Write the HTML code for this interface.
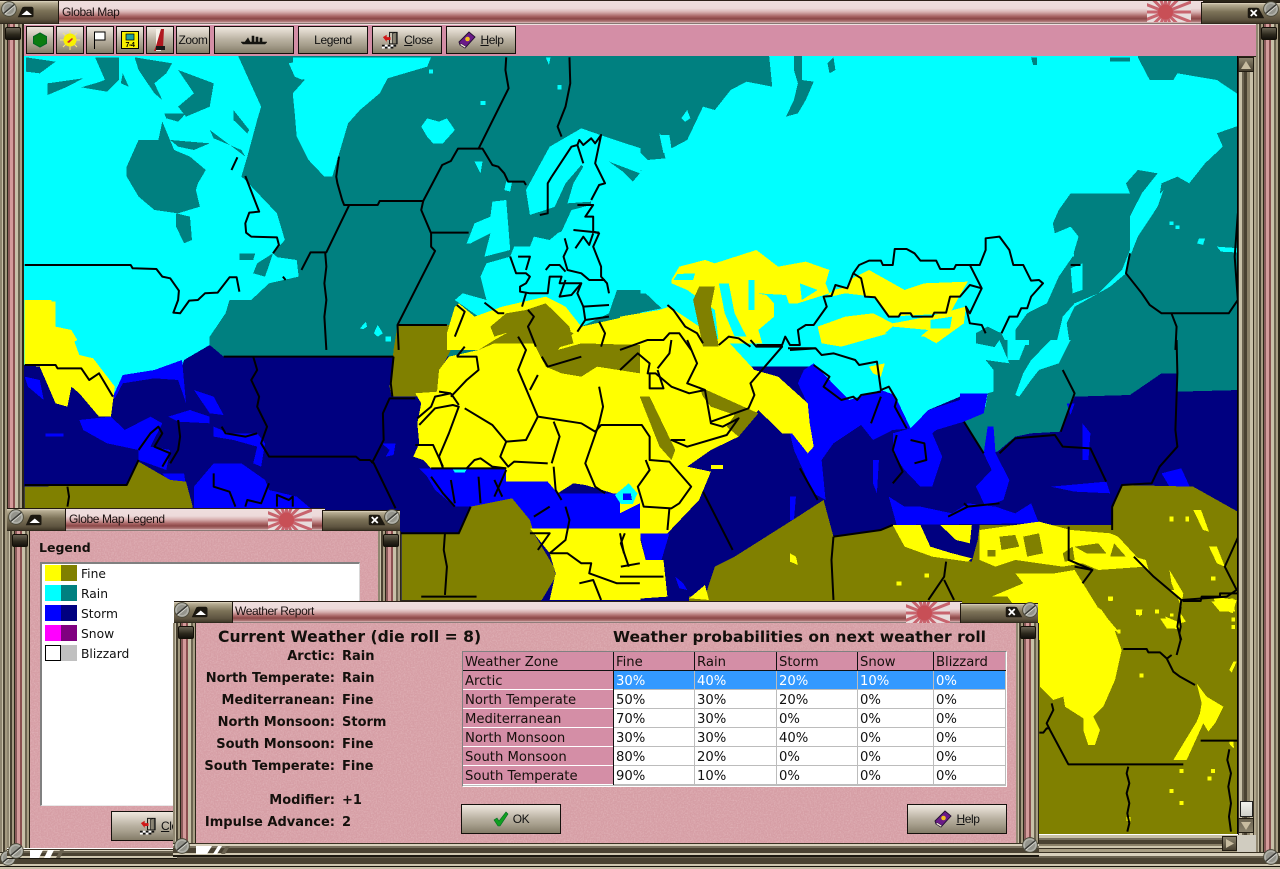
<!DOCTYPE html>
<html><head><meta charset="utf-8"><title>Global Map</title>
<style>
html,body{margin:0;padding:0;background:#2a2418}
body{position:relative;width:1280px;height:869px;overflow:hidden;font-family:"Liberation Sans",sans-serif;color:#000}
.a{position:absolute}
.title{position:absolute;background:linear-gradient(#2c2018 0 1px,#efdede 1px,#eddada 35%,#d8b0b0 50%,#a86464 68%,#8c4848 78%,#b07878 90%,#e4cccc 96%,#201810 100%)}
.cap{position:absolute;background:linear-gradient(#201810 0 1px,#e0d8c4 1px,#b8ae94 12%,#7c7258 45%,#5e5440 80%,#403828 96%,#1c1810 100%);border-right:1px solid #201810;border-left:1px solid #201810;box-sizing:border-box}
.tt{position:absolute;font-size:12px;letter-spacing:-.4px;line-height:13px;white-space:nowrap;color:#1a1010}
.vf{position:absolute;background:linear-gradient(to right,#8f8670 0 2px,#c8c0a8 2px 3px,#4a4232 3px 5px,#a49a80 5px 7px,#2c2618 7px 8px,#8a5a5a 8px 10px,#d49a9a 10px 13px,#8a5050 13px 15px,#c8c0a8 15px 18px,#6c6450 18px 20px,#a89e84 20px 22px,#2c2618 22px 23px)}
.hf{position:absolute;background:linear-gradient(#d8d0bc 0 2px,#3a3224 2px 3px,#c8c0a8 3px 5px,#8a8068 5px 8px,#5a5240 8px 11px,#cfc7b0 11px 13px,#403828 13px 14px)}
.knob{position:absolute;width:14px;height:11px;border-radius:2px;background:linear-gradient(#6a6454,#2c281c 60%,#14120c);border:1px solid #141008}
.body{position:absolute;background:#d69ea5}
.noise{position:absolute;left:0;top:0;width:100%;height:100%}
.btn{position:absolute;box-sizing:border-box;border:1px solid #15100c;background:linear-gradient(#eee7de,#d8d0c4 22%,#b8b0a0 50%,#a49c8a 72%,#847c68);font-size:12px;letter-spacing:-.4px;display:flex;align-items:center;justify-content:center;color:#111;white-space:nowrap}
.btn u{text-decoration:underline}
.b{font-family:"DejaVu Sans",sans-serif;font-weight:bold;position:absolute;white-space:nowrap;color:#14100c}
.lst{font-family:"DejaVu Sans",sans-serif;font-size:12.3px;position:absolute;left:81px;white-space:nowrap;color:#111}
.sw{position:absolute;width:16px;height:16px}
.grid{position:absolute;left:462px;top:651px;box-sizing:border-box;width:545px;height:136px;background:#bcbcbc;border:1px solid #fff;border-top-color:#808080;border-left-color:#808080;display:grid;grid-template-columns:150px 80px 81px 80px 75px 71px;grid-template-rows:18px repeat(6,18px);gap:1px;font-family:"DejaVu Sans",sans-serif;font-size:13.2px;line-height:21px}
.grid div{background:#fff;padding-left:2px;white-space:nowrap;overflow:hidden;color:#111}
.grid .h{background:#d48ea6;color:#15100c;box-shadow:0 1px 0 #fff}
.grid .s{background:#3399ff;color:#fff}
#map polygon,#map rect{shape-rendering:crispEdges}
#map polyline{fill:none;stroke:#000;stroke-width:2;vector-effect:non-scaling-stroke;stroke-linejoin:round}
.z7{transform:translate(20px,50px) scale(.3953,.3333)}
.z8{transform:translate(620px,50px) scale(.3953,.3333)}
.z9{transform:translate(20px,300px) scale(.3953,.3333)}
.z10{transform:translate(620px,340px) scale(.3953,.3333)}
.z11{transform:translate(1030px,590px) scale(.3333,.3333)}
</style></head><body>

<svg width="0" height="0" style="position:absolute"><defs>
<filter id="nz" x="0" y="0" width="100%" height="100%"><feTurbulence type="fractalNoise" baseFrequency=".7" numOctaves="2" seed="4"/><feColorMatrix values="0 0 0 0 1  0 0 0 0 .85  0 0 0 0 .85  1.1 0 0 0 -.42"/></filter>
<symbol id="sun" viewBox="0 0 44 21"><rect width="44" height="21" fill="#e8dcdc"/><g stroke="#c8646e" stroke-width="3"><path d="M-11.500 11L48.500 11M-9.500 0L46.500 22M-2.500 -10L39.500 32M7.500 -17L29.500 39M18.500 -19L18.500 41M29.500 -17L7.500 39M39.500 -10L-2.500 32M46.500 0L-9.500 22"/></g><circle cx="18.500" cy="11" r="7.500" fill="#c84f56"/></symbol>
<symbol id="screw" viewBox="0 0 18 18"><circle cx="9" cy="9" r="8.300" fill="#b0b0a8" stroke="#4a4838"/><circle cx="9" cy="9" r="5.800" fill="#94948c"/><path d="M3 14L15 4" stroke="#3c3c38" stroke-width="1.800"/><path d="M4 15L16 5" stroke="#dcdcd4" stroke-width="1"/></symbol>
<symbol id="tri" viewBox="0 0 24 16"><path d="M1 15L7 2Q8 1 10 1L19 1Q22 1 22 4L22 13Q22 15 20 15Z" fill="#1c1810"/><path d="M6 12L13 6L20 12Z" fill="#fff"/></symbol>
<symbol id="xb" viewBox="0 0 24 16"><path d="M1 3Q1 1 3 1L13 1Q15 1 16 2L23 15L3 15Q1 15 1 13Z" fill="#1c1810"/><path d="M5 4L13 12M13 4L5 12" stroke="#fff" stroke-width="2.400"/></symbol>
<symbol id="book" viewBox="0 0 18 18"><path d="M1 11L11 1L17 6L7 17L2 14Z" fill="#6a1a88" stroke="#221030" stroke-width=".9"/><path d="M2 14L7 17L8 15.500L3 12.500Z" fill="#f0e8d8" stroke="#221030" stroke-width=".5"/><circle cx="9.500" cy="8" r="2.300" fill="#f0c020"/></symbol>
<symbol id="door" viewBox="0 0 20 18"><path d="M9 1L17 1L17 13L9 13Z" fill="#c8c0b0" stroke="#111"/><path d="M12 2L16 1L16 13L12 13Z" fill="#8a8474" stroke="#111" stroke-width=".6"/><path d="M2 6L6 3.500L6 6L10 6L10 9L6 9L6 11Z" fill="#d01818"/><path d="M1 14h3v2h-3zM7 14h3v2h-3zM13 14h3v2h-3zM4 16h3v2h-3zM10 16h3v2h-3z" fill="#111"/><path d="M1 16h3v2h-3zM7 16h3v2h-3zM4 14h3v2h-3zM10 14h3v2h-3z" fill="#fff"/></symbol>
</defs></svg>

<!-- MAP -->
<svg id="map" class="a" style="left:24px;top:56px" width="1214" height="778" viewBox="24 56 1214 778">
<rect x="24" y="56" width="1214" height="420" fill="#00ffff"/>
<!-- teal -->
<g fill="#008080">
<g class="z7">
<polygon points="545,0 610,170 600,210 575,320 560,380 570,390 650,490 670,570 640,610 705,680 630,700 585,750 530,750 520,790 480,860 480,930 1570,930 1570,0"/>
<polygon points="270,350 300,270 350,270 360,215 390,300 430,320 470,360 450,400 445,420 455,470 400,490 340,480 300,440 270,380"/>
<polygon points="395,490 430,500 435,570 415,580 395,530"/>
<polygon points="15,22 90,35 50,70 15,65"/><polygon points="70,100 160,85 120,110 70,135"/>
<polygon points="190,22 250,22 250,90 220,125 155,112 190,100 215,90"/>
<polygon points="290,22 385,40 370,70 340,100 360,150 340,130 300,60"/>
<polygon points="400,60 490,100 480,170 420,200 400,170 440,130"/>
<polygon points="540,180 580,240 575,250 540,210"/><polygon points="260,70 275,110 255,100"/>
<polygon points="365,190 420,190 400,215 370,205"/><polygon points="480,240 570,320 560,300 490,265"/>
<polygon points="380,270 480,280 440,300 400,290"/>
<polygon points="555,610 595,610 590,630 555,630"/><polygon points="600,640 640,610 620,680 590,670"/>
</g>
<g class="z8">
<polygon points="-1,-10 375,-10 385,110 320,95 280,120 240,180 210,170 170,270 130,295 100,250 115,325 70,330 40,295 0,275"/>
<polygon points="440,0 460,0 460,90 490,95 470,150 450,190 420,200 440,150 450,100 440,60"/>
<polygon points="525,40 540,22 545,60 530,70"/><polygon points="1040,22 1055,22 1055,45 1045,45"/><polygon points="1240,22 1290,22 1290,35 1240,35"/>
<polygon points="1310,22 1340,90 1400,90 1410,70 1510,90 1560,130 1570,130 1570,0 1310,0"/>
<polygon points="1570,225 1510,250 1525,290 1480,340 1440,400 1410,380 1370,400 1360,470 1310,560 1290,620 1280,670 1240,710 1150,770 1130,820 1140,900 1570,900"/>
<polygon points="1140,430 1290,430 1280,400 1310,360 1360,370 1320,430 1290,500 1290,600 1270,660 1210,730 1150,760 1120,800 1100,900 1000,900 1000,840 1030,790 1080,760 1110,680 1145,620 1160,560 1140,530 1100,550 1095,520 1110,480"/>
<polygon points="900,850 930,830 965,850 985,900 900,880"/><polygon points="0,345 55,360 25,385 0,375"/>
<polygon points="0,730 65,730 105,775 0,800"/>
</g>
<g class="z10">
<polygon points="1570,0 1570,150 1410,155 1410,100 1370,100 1290,165 1150,170 1115,275 1040,280 1000,290 955,335 920,340 870,245 925,200 930,160 945,155 945,90 925,60 960,0"/>
</g>
</g>
<!-- cyan overlays -->
<g fill="#00ffff">
<g class="z7">
<polygon points="690,22 1040,22 1030,50 930,85 910,130 860,180 830,220 805,320 790,380 770,380 730,330 700,260 695,190 690,130 720,90 690,60"/>
<polygon points="1015,230 1030,205 1060,215 1080,205 1100,240 1070,280 1045,280 1030,260"/>
<polygon points="1130,580 1150,520 1190,500 1195,455 1230,450 1240,600 1175,620 1190,550 1140,580"/>
<polygon points="1100,750 1120,730 1180,750 1165,680 1180,640 1240,620 1250,590 1290,590 1300,560 1340,570 1370,540 1390,480 1380,460 1290,495 1280,420 1340,290 1420,235 1480,260 1570,295 1570,720 1510,720 1490,790 1420,830 1330,790 1220,790 1160,800"/>
<polygon points="1150,335 1170,335 1165,370"/><polygon points="860,835 875,815 878,830 868,838"/><polygon points="895,850 905,825 918,850 905,860"/><polygon points="925,860 938,860 938,875 925,875"/><polygon points="1330,22 1342,22 1338,45"/>
<polygon points="1165,153 1177,153 1177,165 1165,165"/><polygon points="1035,58 1045,58 1045,70 1035,70"/><polygon points="1360,105 1370,105 1370,118 1360,118"/>
<polygon points="1230,395 1245,395 1240,425 1225,420"/>
<polygon points="640,620 700,630 705,680 660,680"/><polygon points="680,40 720,30 715,90 695,80"/>
</g>
<g class="z7" fill="#008080">
<polygon points="1380,400 1420,345 1425,350 1400,400 1385,460 1445,455 1445,465 1395,480 1370,545 1325,560 1310,505 1300,520 1345,490"/>
<polygon points="1490,335 1568,370 1550,395 1525,365"/>
<polygon points="1570,720 1510,720 1490,790 1570,780"/>
</g>
<g class="z8">
<polygon points="100,255 125,255 130,295 110,310"/><polygon points="155,205 170,180 178,205 165,215"/>
<polygon points="1360,470 1375,420 1360,440"/>
<polygon points="1465,565 1480,565 1475,585 1460,580"/><polygon points="1510,590 1568,595 1568,608 1520,605"/>
<polygon points="1390,515 1400,515 1400,525 1390,525"/><polygon points="1405,527 1415,527 1415,537 1405,537"/>
<polygon points="1140,610 1148,610 1148,620 1140,620"/><polygon points="1140,655 1170,640 1170,720 1145,730"/><polygon points="1020,870 1035,870 1035,885 1020,885"/><polygon points="1350,335 1362,335 1362,345 1350,345"/>
</g>
<g class="z10">
<polygon points="1140,0 1110,70 1060,90 1040,120 1010,170 1000,165 1020,100 1040,60 1090,0"/>
<polygon points="980,0 1030,0 1010,60 980,60"/><polygon points="960,0 985,70 925,60"/>
</g>
</g>
<!-- navy -->
<g fill="#000080">
<polygon class="z9" points="0,195 150,200 235,290 260,225 410,200 415,180 480,135 515,170 1570,170 1570,900 0,900"/>
<polygon class="z10" points="-200,80 480,80 530,120 580,180 660,150 695,165 735,265 780,210 860,170 930,160 870,245 920,340 955,335 1000,290 1040,280 1115,275 1150,170 1290,165 1370,100 1410,100 1410,155 1570,150 1570,900 -200,900"/>
</g>
<!-- blue -->
<g fill="#0000ff">
<g class="z9">
<polygon points="235,290 260,225 340,210 410,180 420,310 400,240 340,235 260,250 240,295"/>
<polygon points="150,360 230,350 265,390 330,350 360,370 330,440 380,450 370,510 300,480 300,450 220,430 160,390"/>
<polygon points="375,350 430,330 480,350 480,370 400,365"/>
<polygon points="440,625 440,560 490,490 560,490 620,540 630,570 700,590 735,625"/>
<polygon points="360,520 415,520 420,560 390,570"/>
<polygon points="490,380 530,400 600,400 620,430 610,500 590,490 600,440 540,420 490,410"/>
<polygon points="440,270 490,290 515,345 480,340"/>
<polygon points="915,430 950,430 945,465 925,470 935,450"/>
<polygon points="65,400 110,400 110,410 65,410"/>
<polygon points="1010,505 1230,505 1230,545 1335,545 1360,580 1570,580 1570,685 1290,685 1290,660 1245,595 1140,620 1100,620 1050,570 1030,530"/>
<polygon points="12,230 50,240 60,300 20,260"/>
</g>
<g class="z10">
<polygon points="490,70 530,120 580,180 660,150 695,165 735,265 690,270 640,300 610,255 540,310 510,360 520,480 490,460 440,330 430,280 480,240 470,180 450,130 465,90"/>
<polygon points="735,265 780,210 860,180 860,160 930,160 920,220 870,245 800,270 790,280 815,350 790,440 760,440 720,390 690,340 690,280"/>
<polygon points="930,260 945,260 950,340 985,420 970,480 925,500 900,440 940,390 920,340"/>
<polygon points="680,470 720,500 760,500 840,520 880,490 950,500 1000,520 1040,490 1060,550 700,555"/>
<polygon points="640,360 655,360 650,460 640,430"/>
<polygon points="1090,440 1230,425 1240,460 1150,455"/><polygon points="1370,400 1420,385 1445,450 1390,440"/>
<polygon points="1170,250 1190,280 1185,360 1170,360"/>
<polygon points="430,470 445,470 440,540 430,540"/>
<polygon points="50,580 125,580 105,660 65,660"/>
<polygon points="140,710 160,730 170,750 150,745"/>
<polygon points="1130,190 1150,190 1140,225"/>
<polygon points="1270,460 1360,475 1350,485 1310,485 1270,500"/>
</g>
</g>
<!-- olive -->
<g fill="#808000">
<g class="z9">
<polygon points="12,560 270,555 300,485 380,540 420,545 437,620 437,900 12,900"/>
<polygon points="955,75 1090,75 1090,150 1060,220 1055,275 1020,290 1000,290 940,290 935,260 945,150"/>
<polygon points="965,700 1110,700 1140,620 1245,595 1290,660 1300,700 1350,800 1355,830 1320,900 965,900"/>
</g>
<polygon class="z10" points="120,1600 175,770 215,770 240,680 290,650 450,530 515,480 540,590 660,570 700,555 720,620 890,665 905,600 910,555 1245,555 1245,510 1270,435 1450,440 1570,520 1570,1600"/>
</g>
<!-- yellow -->
<g fill="#ffff00">
<g class="z7">
<polygon points="22,755 90,755 90,830 130,840 145,870 100,900 20,900 12,830"/>
<polygon points="1080,850 1100,770 1110,760 1150,800 1220,770 1330,740 1380,770 1420,830 1570,790 1570,900 1080,900"/>
</g>
<g class="z8">
<polygon points="130,690 150,650 215,630 240,640 345,600 400,650 470,635 530,660 520,700 530,730 450,760 390,760 390,800 350,840 360,880 250,880 240,780 170,720 130,700"/>
<polygon points="580,690 630,660 720,720 770,700 880,695 860,735 835,790 680,800 640,740 570,730 515,745 540,720 580,710"/>
<polygon points="500,830 570,800 640,790 690,820 780,800 875,770 870,820 800,880 770,860 680,850 560,890 510,880"/>
<polygon points="0,800 100,780 125,770 290,900 0,900"/>
</g>
<g class="z8" fill="#00ffff">
<polygon points="250,700 275,700 290,790 320,860 290,860 265,790"/>
<polygon points="325,690 340,690 340,780 325,780"/>
<polygon points="345,730 420,735 430,770 390,760 370,735"/>
<polygon points="455,700 500,720 460,750"/>
<polygon points="135,690 185,690 190,670 145,672"/>
<polygon points="690,830 780,840 760,860 670,850"/>
<polygon points="785,810 840,800 835,835 785,835"/>
</g>
<g class="z9">
<polygon points="12,0 80,0 85,110 130,100 150,165 185,175 240,260 230,350 200,350 150,280 130,260 120,320 90,310 50,200 12,195"/>
<polygon points="995,470 1010,430 1005,370 1015,310 1000,280 1055,275 1060,210 1085,170 1160,150 1280,130 1570,100 1570,580 1500,580 1430,555 1400,550 1360,580 1335,545 1230,545 1230,505 1090,505 1040,505 1020,480"/>
<polygon points="1290,685 1570,685 1570,900 1340,900 1355,820 1340,760"/>
</g>
<g class="z10">
<polygon points="0,0 270,0 340,90 400,110 475,190 480,250 490,320 475,340 435,280 410,280 350,210 300,290 230,330 170,380 230,395 200,480 120,580 50,580 50,490 0,520"/>
<polygon points="0,570 45,570 65,660 110,660 120,770 0,780"/>
<polygon points="175,775 215,735 225,780"/>
<polygon points="690,555 760,555 785,620 840,640 890,655 880,665 790,650 720,620"/>
<polygon points="810,555 890,555 885,610 850,600"/>
<polygon points="910,570 1060,545 1140,570 1240,580 1260,590 1330,680 1210,690 1170,670 1120,680 1000,660 950,680 910,660"/>
<polygon points="1000,700 1100,700 1150,690 1260,900 1060,900 980,770 940,770 1020,730"/>
<polygon points="630,80 670,70 660,110 640,100"/>
<polygon points="230,375 260,375 260,387 230,387"/><polygon points="430,640 445,650 450,675 430,665"/>
<polygon points="1450,510 1470,510 1490,575 1475,570"/><polygon points="1490,620 1510,620 1530,680 1510,670"/>
<polygon points="1390,690 1425,760 1420,800 1395,730"/><polygon points="1380,830 1420,850 1415,870 1385,860"/>
<polygon points="1500,770 1560,780 1550,820 1510,800"/>
<polygon points="1300,650 1340,700 1330,660"/><polygon points="1215,810 1265,880 1230,860"/>
<polygon points="1390,530 1400,530 1400,545 1390,545"/><polygon points="1430,530 1440,530 1440,545 1430,545"/><polygon points="770,700 782,700 782,712 770,712"/><polygon points="700,725 712,725 712,737 700,737"/><polygon points="1235,770 1247,770 1247,782 1235,782"/><polygon points="1305,810 1320,810 1320,825 1305,825"/><polygon points="1495,710 1507,710 1507,722 1495,722"/>
</g>
<g class="z10" fill="#808000">
<polygon points="960,590 1000,585 1010,620 965,630"/><polygon points="1020,590 1060,580 1070,640 1030,650"/><polygon points="1150,620 1210,610 1230,640 1180,640"/><polygon points="930,630 950,630 950,650 930,650"/><polygon points="1250,610 1280,650 1240,650"/><polygon points="1120,640 1145,620 1150,660 1125,665"/>
</g>
<g class="z11">
<polygon points="30,0 160,0 185,40 215,60 250,110 275,180 255,270 220,350 190,380 210,420 195,465 175,465 160,420 160,385 105,350 100,320 70,330 30,290"/>
<polygon points="500,280 530,320 580,350 555,400 535,425 520,400 470,510 430,510 500,395 510,370 515,340"/>
<polygon points="545,35 610,25 615,65 570,65"/><polygon points="390,85 415,85 435,115 410,115"/><polygon points="420,0 450,0 450,30"/><polygon points="315,58 338,58 330,80"/>
<polygon points="235,20 248,20 248,33 235,33"/><polygon points="375,58 387,58 387,70 375,70"/><polygon points="420,70 430,70 430,80 420,80"/><polygon points="605,82 615,82 615,94 605,94"/><polygon points="605,105 615,105 615,117 605,117"/><polygon points="610,215 620,215 605,248 598,240"/><polygon points="328,250 340,250 340,262 328,262"/><polygon points="448,537 460,537 460,549 448,549"/><polygon points="543,537 555,537 555,549 543,549"/><polygon points="532,560 544,560 544,572 532,572"/><polygon points="418,597 430,597 430,609 418,609"/><polygon points="448,633 460,633 460,645 448,645"/><polygon points="290,681 302,681 302,693 290,693"/><polygon points="598,455 610,455 612,475 600,465"/><polygon points="262,118 272,118 272,130 262,130"/><polygon points="445,60 468,95 450,100"/>
</g>
</g>
<!-- olive over -->
<g fill="#808000">
<g class="z7"><polygon points="1190,830 1230,790 1280,780 1330,760 1390,830 1400,880 1340,900 1280,830 1200,860"/></g>
<g class="z8"><polygon points="200,710 240,710 230,770 250,890 210,890 185,750"/></g>
<g class="z9"><polygon points="1160,150 1200,120 1230,100 1250,50 1300,30 1340,60 1400,100 1360,150 1420,130 1568,135 1568,220 1460,200 1420,230 1370,220 1330,200 1300,130 1200,130"/></g>
<g class="z10"><polygon points="50,170 75,170 140,330 130,360 100,320"/><polygon points="200,140 350,220 300,290 270,260 290,225 230,200 210,170"/></g>
</g>
<!-- small cyan ring -->
<g class="z9"><polygon points="1505,585 1540,550 1562,580 1550,612 1520,612" fill="#00ffff"/><polygon points="1525,580 1545,580 1548,600 1525,600" fill="#0000ff"/><polygon points="1095,508 1130,508 1125,518 1100,518" fill="#00ffff"/></g>
<!-- borders -->
<g class="z7">
<polyline points="12,645 280,645 285,655 345,657 360,680 380,685 402,722 400,750 388,788 405,790 428,752 450,750 468,730 500,728 530,682 548,682 555,725"/>
<polyline points="550,322 535,360"/>
<polyline points="570,378 605,485 580,488 570,520 572,548 585,560 650,562 655,585 640,610"/>
<polyline points="665,680 672,690"/>
<polyline points="807,320 800,380 803,400 815,450 820,465 905,465 910,453 1020,453 1068,345 1090,333 1108,296 1170,296 1195,345 1210,350 1225,370 1235,395 1275,395 1280,405"/>
<polyline points="1230,22 1228,60 1236,115 1160,296"/>
<polyline points="1390,22 1392,100 1380,170 1360,230 1370,260"/>
<polyline points="833,465 775,607 735,607 712,660"/>
<polyline points="772,607 775,650 770,700 775,750 770,800 775,900"/>
<polyline points="1020,453 1015,480 1040,550 1040,590 1050,603 955,825 958,900"/>
<polyline points="1040,548 1135,548"/><polyline points="955,825 1080,825"/>
<polyline points="1345,380 1395,290 1410,285 1415,270 1425,285 1445,265 1455,280 1470,255 1455,340 1480,400 1465,405 1445,450"/>
<polyline points="1345,380 1335,400 1335,460 1335,490 1315,495"/>
<polyline points="1410,285 1425,340"/>
<polyline points="1410,465 1450,465 1430,500 1450,500 1450,545 1465,550 1450,590 1470,650 1470,680 1485,700 1490,730"/>
<polyline points="1400,540 1465,548"/><polyline points="1378,565 1385,595 1375,620 1385,660 1420,670 1440,690 1480,690"/>
<polyline points="1405,595 1425,560 1440,585 1450,550"/>
<polyline points="1240,620 1255,670 1280,670 1290,680 1280,700 1265,710 1265,725 1290,730 1335,730 1340,680 1370,680 1365,700 1420,700 1410,730 1425,770 1490,765"/>
<polyline points="1260,620 1290,620 1280,660"/>
<polyline points="1330,660 1340,645 1365,645 1380,665"/>
<polyline points="1425,770 1430,810 1410,845"/><polyline points="1430,810 1490,800"/>
<polyline points="1105,765 1125,785 1100,860"/><polyline points="1175,758 1210,790 1225,790"/>
<polyline points="1270,770 1280,730"/><polyline points="1285,780 1300,800 1285,830 1305,890"/>
<polyline points="1380,690 1365,740 1395,735 1420,700"/>
<polyline points="1465,815 1480,850 1470,890"/>
</g>
<g class="z8">
<polyline points="120,765 135,780 165,830 195,850 210,880"/>
<polyline points="425,895 495,895"/>
<polyline points="345,885 410,885 418,860 430,885 455,885 450,840 470,825 490,825 523,770 515,740 535,738 545,705 575,715 590,670 605,645 630,632 660,632 665,645 690,645 695,597 725,597 745,610 760,632 800,632 810,657 845,657 850,645 910,645 925,600 925,565 960,560 985,600 995,645 1020,645 1040,692 1060,690 1070,700 1040,740 1030,775 1015,775 1005,800 985,800 965,850"/>
<polyline points="590,670 610,685 620,740 645,742 680,800 705,800 710,790 735,790 740,800 790,800 795,788 825,788 835,740 860,740 885,705 915,715 885,645"/>
<polyline points="915,715 885,790 875,770 885,820 915,825 925,850"/>
<polyline points="1140,645 1165,645"/>
<polyline points="1290,610 1285,640 1280,670 1320,730 1340,765 1370,790 1540,790 1563,750 1555,620 1563,490"/>
<polyline points="1395,790 1408,830 1405,900"/>
<polyline points="0,900 70,870 110,870 125,850 150,850 180,900"/>
<polyline points="250,885 275,860 300,865 330,890"/>
</g>
<g class="z9">
<polyline points="12,195 90,195 95,205 155,205 175,240 200,220 235,290"/>
<polyline points="590,170 600,210 585,240 605,290 600,320 625,380 610,430 630,470 850,470 860,480 885,480 895,490 950,625"/>
<polyline points="890,490 920,420 918,340 935,295 1000,295"/>
<polyline points="300,480 270,555 12,555"/><polyline points="120,560 124,590 120,620"/>
<polyline points="515,170 945,170"/><polyline points="945,170 938,250 942,290"/>
<polyline points="300,450 330,400 350,380 360,400 340,440 380,460 360,500"/>
<polyline points="400,360 405,410 400,450 380,490"/>
<polyline points="510,380 520,400 570,410 600,400"/>
<polyline points="490,520 490,560 530,575 545,620"/><polyline points="570,620 575,600 610,610 630,550"/><polyline points="650,620 650,585 680,600 690,590 690,620"/>
<polyline points="960,700 1110,700 1140,620"/><polyline points="1075,700 1072,750 1080,800 1075,885"/><polyline points="1015,890 1155,890"/>
<polyline points="1010,375 1050,325 1095,315 1110,320 1085,400 1060,470 1070,505"/>
<polyline points="1125,325 1195,375 1230,425 1280,420 1310,350 1420,370 1455,395 1470,375 1568,375"/>
<polyline points="1005,355 1040,320 1050,290 1090,280"/><polyline points="1090,280 1110,315"/><polyline points="1090,290 1130,240 1160,210 1155,170 1105,170"/><polyline points="1060,275 1090,280"/>
<polyline points="1310,350 1260,210 1280,150 1260,110"/><polyline points="1290,270 1310,225"/>
<polyline points="1350,365 1365,410 1345,490"/><polyline points="1350,500 1355,570 1370,600"/>
<polyline points="1230,425 1215,470 1235,500 1250,485 1335,490"/>
<polyline points="1465,370 1430,490 1455,560 1480,580"/><polyline points="1465,370 1475,320 1465,260"/>
<polyline points="1000,435 1045,435 1070,500"/><polyline points="1130,505 1150,480 1165,475 1195,500 1230,505"/>
<polyline points="1040,505 1230,505"/><polyline points="1040,530 1070,580 1100,620"/><polyline points="1090,540 1100,610"/><polyline points="1160,530 1165,610"/><polyline points="1200,540 1220,590"/><polyline points="1230,510 1200,590"/>
<polyline points="1320,170 1335,200 1420,170"/><polyline points="1105,170 1125,140"/>
<polyline points="1290,700 1340,700 1310,750"/><polyline points="1340,760 1385,760 1420,790 1445,790 1440,820 1510,850 1568,850"/>
<polyline points="1300,650 1340,620"/><polyline points="1380,620 1390,660 1380,720 1340,760"/><polyline points="1520,800 1568,790"/><polyline points="1530,700 1520,730 1540,800"/>
<polyline points="1415,850 1450,840 1470,900"/>
</g>
<g class="z10">
<polyline points="0,255 55,255 75,290 75,360 125,365 180,440 150,490 130,505 60,500 45,440 75,390 65,360"/>
<polyline points="0,90 45,40 75,70 70,100 90,100 130,140 175,160 215,150 230,250 260,260 300,235 270,285 170,320 130,300 165,300"/>
<polyline points="170,0 195,70 170,130 215,150"/>
<polyline points="330,0 345,20 410,20 330,130 340,165 325,205 230,245"/>
<polyline points="130,0 125,40 95,85"/><polyline points="75,100 75,145 110,145 95,90"/>
<polyline points="430,30 495,25 510,45 540,40 595,60 605,75 650,65 660,150 680,140 700,180 695,200 725,265"/>
<polyline points="490,75 530,110 515,140 560,180 590,170 600,180 610,165 660,155"/>
<polyline points="660,170 635,250"/>
<polyline points="700,285 690,330 715,395 690,430"/><polyline points="735,300 770,310 775,360 745,370"/>
<polyline points="210,455 285,630"/><polyline points="455,385 500,480"/>
<polyline points="870,245 920,340"/><polyline points="960,340 1000,295 1100,285 1120,320 1190,325 1230,425"/>
<polyline points="1120,90 1150,160 1115,275"/>
<polyline points="1408,0 1410,100 1405,270 1410,320 1365,380 1345,430 1270,435 1245,500 1245,570"/>
<polyline points="540,590 535,660 540,780"/><polyline points="540,590 660,570 690,555"/>
<polyline points="825,665 820,710 780,780"/><polyline points="820,720 845,780"/>
<polyline points="870,490 880,500 960,490"/><polyline points="830,530 880,500"/>
<polyline points="1135,560 1135,660 1195,690 1170,730"/><polyline points="1195,690 1150,680"/>
<polyline points="1300,650 1350,710 1420,780 1535,770 1560,750 1530,680 1568,580"/>
<polyline points="1420,780 1410,860 1420,900"/>
<polyline points="125,505 120,570"/><polyline points="0,580 10,640"/><polyline points="0,710 110,710"/>
</g>
<g class="z11">
<polyline points="280,177 350,177 355,187 390,187 410,205 430,245 450,260 495,285"/>
<polyline points="412,205 425,195"/><polyline points="458,33 512,33 515,20 570,20 570,10 625,10"/>
<polyline points="452,50 448,80 452,110 448,130 452,150 440,195"/>
<polyline points="65,340 70,360 50,400 60,420 115,523 460,523"/><polyline points="28,428 40,428 50,415 60,415"/>
<polyline points="295,530 290,550 298,580 290,610 298,640 292,670 298,700 292,725"/>
<polyline points="512,452 625,452"/><polyline points="598,478 592,510 603,550 595,590 603,640 597,680 603,725"/>
</g>
<rect x="1237" y="56" width="1" height="778" fill="#000"/>
</svg>

<!-- MAIN WINDOW FRAME -->
<div class="title" style="left:58px;top:0;width:1145px;height:24px"></div>
<div class="tt" style="left:62px;top:6px">Global Map</div>
<svg class="a" style="left:1147px;top:1px" width="44" height="21"><use href="#sun"/></svg>
<div class="cap" style="left:0;top:0;width:59px;height:24px;border-left:0"></div>
<svg class="a" style="left:17px;top:6px" width="18" height="12"><use href="#tri"/></svg>
<svg class="a" style="left:1px;top:1px" width="16" height="16"><use href="#screw"/></svg>
<div class="cap" style="left:1201px;top:2px;width:79px;height:22px;border-right:0"></div>
<svg class="a" style="left:1247px;top:7px" width="18" height="12"><use href="#xb"/></svg>
<svg class="a" style="left:1263px;top:1px" width="16" height="16"><use href="#screw"/></svg>

<div class="vf" style="left:0;top:24px;width:24px;height:830px"></div>
<div class="knob" style="left:5px;top:27px"></div>
<div class="vf" style="left:1256px;top:24px;width:24px;height:830px"></div>
<div class="knob" style="left:1261px;top:27px"></div>

<div class="a" style="left:24px;top:24px;width:1232px;height:32px;background:#d48ea6;border-top:1px solid #efe0e0;box-sizing:border-box"></div>
<!-- toolbar -->
<div class="btn" style="left:26px;top:26px;width:28px;height:28px"><svg width="18" height="18" viewBox="0 0 18 18"><path d="M9 2L15.500 5.500L15.500 12.500L9 16L2.500 12.500L2.500 5.500Z" fill="#0c7c10" stroke="#062"/></svg></div>
<div class="btn" style="left:56px;top:26px;width:28px;height:28px"><svg width="22" height="22" viewBox="0 0 22 22"><g stroke="#f4e87a" stroke-width="1"><path d="M11 1V21M1 11H21M4 4L18 18M18 4L4 18"/></g><circle cx="11" cy="11" r="6.500" fill="#f8f000"/><path d="M8 13L13 9L14 10L10 14Z" fill="#d02030"/></svg></div>
<div class="btn" style="left:86px;top:26px;width:28px;height:28px"><svg width="16" height="20" viewBox="0 0 16 20"><path d="M2.500 19V2H13V10H3" fill="#fff" stroke="#000"/></svg></div>
<div class="btn" style="left:116px;top:26px;width:28px;height:28px"><svg width="20" height="20" viewBox="0 0 20 20"><rect x="1.500" y="1.500" width="17" height="17" fill="#f8f000" stroke="#000"/><rect x="6" y="4" width="8" height="6" fill="#20a0a0" stroke="#000" stroke-width=".7"/><text x="10" y="17" font-size="7" font-weight="bold" text-anchor="middle" font-family="Liberation Sans">7-4</text></svg></div>
<div class="btn" style="left:146px;top:26px;width:28px;height:28px"><svg width="18" height="24" viewBox="0 0 18 24"><rect x="5" y="1" width="5" height="22" fill="#f4f0e8"/><path d="M10 1L13 1L12 20L5 21L5 23L3 23L5 18Z" fill="#b01820"/><rect x="5" y="18" width="9" height="4" fill="#1a1a1a"/></svg></div>
<div class="btn" style="left:176px;top:26px;width:34px;height:28px">Zoom</div>
<div class="btn" style="left:214px;top:26px;width:80px;height:28px"><svg width="26" height="10" viewBox="0 0 26 10"><path d="M0 7H26L24 9H2ZM4 7L7 3L9 7M11 7V1H13V7M15 7V2H17V7M19 7V3H21V7" fill="#151510" stroke="#151510" stroke-width=".6"/></svg></div>
<div class="btn" style="left:298px;top:26px;width:70px;height:28px">Legend</div>
<div class="btn" style="left:372px;top:26px;width:70px;height:28px"><svg width="19" height="18" style="margin-right:4px"><use href="#door"/></svg><span><u>C</u>lose</span></div>
<div class="btn" style="left:446px;top:26px;width:70px;height:28px"><svg width="18" height="18" style="margin-right:4px"><use href="#book"/></svg><span><u>H</u>elp</span></div>

<!-- scrollbars -->
<div class="a" style="left:1238px;top:57px;width:18px;height:778px;background:linear-gradient(to right,#3a3224 0 1px,#c8c0a8 1px 4px,#6a6250 4px 6px,#4a4232 6px 9px,#8a8068 9px 12px,#c8c0a8 12px 15px,#3a3224 15px 16px,#b0a68c 16px 18px)"></div>
<div class="a" style="left:1238px;top:57px;width:16px;height:15px;background:linear-gradient(#8a826c,#4a4232);border:1px solid #221c12;box-sizing:border-box"><svg width="14" height="13" style="display:block"><path d="M7 3L12 11H2Z" fill="#c8bca0"/></svg></div>
<div class="a" style="left:1240px;top:801px;width:13px;height:16px;background:linear-gradient(#f2f2ee,#cfcfc8);border:1px solid #222;box-sizing:border-box"></div>
<div class="a" style="left:1238px;top:818px;width:16px;height:15px;background:linear-gradient(#6a6250,#8a826c);border:1px solid #221c12;box-sizing:border-box"><svg width="14" height="13" style="display:block"><path d="M7 11L12 3H2Z" fill="#c8bca0"/></svg></div>
<div class="hf" style="left:1024px;top:834px;width:214px;height:18px;background:linear-gradient(#fff 0 1px,#c8c0a8 1px 4px,#7a7260 4px 6px,#4a4232 6px 10px,#8a8068 10px 12px,#d0c8b0 12px 14px,#3a3224 14px 15px,#a89e84 15px 18px)"></div>
<div class="a" style="left:1222px;top:836px;width:15px;height:15px;background:linear-gradient(#8a826c,#4a4232);border:1px solid #221c12;box-sizing:border-box"><svg width="13" height="13" style="display:block"><path d="M3 2L11 6.500L3 11Z" fill="#c8bca0"/></svg></div>
<div class="a" style="left:1237px;top:835px;width:19px;height:17px;background:#d0ccc0"></div>
<div class="hf" style="left:0;top:852px;width:1280px;height:17px;background:linear-gradient(#3a3224 0 1px,#d8d0bc 1px 4px,#6a6250 4px 6px,#4a4232 6px 12px,#cfc7b0 12px 14px,#1a160e 14px 15px,#c8c0a8 15px 17px)"></div>
<svg class="a" style="left:1263px;top:849px" width="16" height="16"><use href="#screw"/></svg>
<svg class="a" style="left:0;top:850px" width="16" height="16"><use href="#screw"/></svg>

<!-- LEGEND WINDOW -->
<div class="title" style="left:65px;top:508px;width:260px;height:23px"></div>
<div class="tt" style="left:69px;top:513px">Globe Map Legend</div>
<svg class="a" style="left:268px;top:509px" width="44" height="21"><use href="#sun"/></svg>
<div class="cap" style="left:7px;top:508px;width:59px;height:23px;border-left:0"></div>
<svg class="a" style="left:25px;top:514px" width="18" height="12"><use href="#tri"/></svg>
<svg class="a" style="left:8px;top:509px" width="16" height="16"><use href="#screw"/></svg>
<div class="cap" style="left:322px;top:510px;width:78px;height:21px;border-right:0"></div>
<svg class="a" style="left:368px;top:514px" width="18" height="12"><use href="#xb"/></svg>
<svg class="a" style="left:384px;top:509px" width="16" height="16"><use href="#screw"/></svg>
<div class="vf" style="left:7px;top:531px;width:23px;height:320px"></div>
<div class="knob" style="left:12px;top:534px"></div>
<div class="vf" style="left:378px;top:531px;width:23px;height:100px"></div>
<div class="knob" style="left:383px;top:534px"></div>
<div class="body" style="left:30px;top:531px;width:348px;height:318px;overflow:hidden"><svg class="noise"><rect width="100%" height="100%" filter="url(#nz)" opacity=".45"/></svg></div>
<div class="hf" style="left:7px;top:848px;width:170px;height:11px;background:linear-gradient(#fff 0 1px,#3a3224 1px 2px,#d8d0bc 2px 3px,#6a6250 3px 5px,#4a4232 5px 8px,#cfc7b0 8px 10px,#1a160e 10px 11px)"></div>
<svg class="a" style="left:30px;top:850px" width="50" height="8"><path d="M0 0H13L9 8H0ZM18 0H24L20 8H14Z" fill="#fff"/><path d="M30 0H34L30 8H26Z" fill="#6a6250"/></svg>
<svg class="a" style="left:8px;top:843px" width="16" height="16"><use href="#screw"/></svg>
<div class="b" style="left:39px;top:540px;font-size:12.500px;line-height:15px">Legend</div>
<div class="a" style="left:40px;top:562px;width:320px;height:244px;box-sizing:border-box;background:#fff;border:1px solid #fff;border-top:2px solid #808080;border-left:2px solid #808080;border-right-color:#d8d8d8;border-bottom-color:#e8e8e8"></div>
<div class="sw" style="left:45px;top:565px;background:#ffff00"></div><div class="sw" style="left:61px;top:565px;background:#808000"></div><div class="lst" style="top:567px">Fine</div>
<div class="sw" style="left:45px;top:585px;background:#00ffff"></div><div class="sw" style="left:61px;top:585px;background:#008080"></div><div class="lst" style="top:587px">Rain</div>
<div class="sw" style="left:45px;top:605px;background:#0000ff"></div><div class="sw" style="left:61px;top:605px;background:#000080"></div><div class="lst" style="top:607px">Storm</div>
<div class="sw" style="left:45px;top:625px;background:#ff00ff"></div><div class="sw" style="left:61px;top:625px;background:#800080"></div><div class="lst" style="top:627px">Snow</div>
<div class="sw" style="left:45px;top:645px;background:#fff;border:1px solid #000;box-sizing:border-box"></div><div class="sw" style="left:61px;top:645px;background:#c0c0c0"></div><div class="lst" style="top:647px">Blizzard</div>
<div class="btn" style="left:111px;top:811px;width:100px;height:30px;justify-content:flex-start;padding-left:27px"><svg width="19" height="18" style="margin-right:3px"><use href="#door"/></svg><span><u>C</u>lose</span></div>

<!-- WEATHER WINDOW -->
<div class="title" style="left:232px;top:601px;width:730px;height:22px"></div>
<div class="tt" style="left:235px;top:605px">Weather Report</div>
<svg class="a" style="left:906px;top:602px" width="44" height="21"><use href="#sun"/></svg>
<div class="cap" style="left:174px;top:601px;width:59px;height:22px;border-left:0"></div>
<svg class="a" style="left:191px;top:606px" width="18" height="12"><use href="#tri"/></svg>
<svg class="a" style="left:174px;top:602px" width="16" height="16"><use href="#screw"/></svg>
<div class="cap" style="left:960px;top:603px;width:78px;height:20px;border-right:0"></div>
<svg class="a" style="left:1005px;top:606px" width="18" height="12"><use href="#xb"/></svg>
<svg class="a" style="left:1022px;top:602px" width="16" height="16"><use href="#screw"/></svg>
<div class="vf" style="left:173px;top:623px;width:23px;height:232px"></div>
<div class="knob" style="left:178px;top:626px"></div>
<div class="vf" style="left:1016px;top:623px;width:23px;height:232px"></div>
<div class="knob" style="left:1020px;top:626px"></div>
<div class="body" style="left:196px;top:623px;width:820px;height:221px;overflow:hidden"><svg class="noise"><rect width="100%" height="100%" filter="url(#nz)" opacity=".45"/></svg></div>
<div class="hf" style="left:173px;top:843px;width:866px;height:14px;background:linear-gradient(#3a3224 0 1px,#d8d0bc 1px 3px,#7a7260 3px 5px,#4a4232 5px 10px,#cfc7b0 10px 12px,#1a160e 12px 14px)"></div>
<svg class="a" style="left:174px;top:838px" width="16" height="16"><use href="#screw"/></svg>
<svg class="a" style="left:1022px;top:837px" width="16" height="16"><use href="#screw"/></svg>
<svg class="a" style="left:196px;top:846px" width="50" height="8"><path d="M0 0H16L11 8H0ZM22 0H26L21 8H17Z" fill="#fff"/><path d="M30 0H34L29 8H25Z" fill="#6a6250"/></svg>

<div class="b" style="left:218px;top:628px;font-size:15.600px;line-height:18px">Current Weather (die roll = 8)</div>
<div class="b" style="left:613px;top:628px;font-size:15.500px;line-height:18px">Weather probabilities on next weather roll</div>

<div class="b" style="right:945px;top:649px;font-size:13px;line-height:16px">Arctic:</div><div class="b" style="left:342px;top:649px;font-size:13px;line-height:16px">Rain</div>
<div class="b" style="right:945px;top:671px;font-size:13px;line-height:16px">North Temperate:</div><div class="b" style="left:342px;top:671px;font-size:13px;line-height:16px">Rain</div>
<div class="b" style="right:945px;top:693px;font-size:13px;line-height:16px">Mediterranean:</div><div class="b" style="left:342px;top:693px;font-size:13px;line-height:16px">Fine</div>
<div class="b" style="right:945px;top:715px;font-size:13px;line-height:16px">North Monsoon:</div><div class="b" style="left:342px;top:715px;font-size:13px;line-height:16px">Storm</div>
<div class="b" style="right:945px;top:737px;font-size:13px;line-height:16px">South Monsoon:</div><div class="b" style="left:342px;top:737px;font-size:13px;line-height:16px">Fine</div>
<div class="b" style="right:945px;top:759px;font-size:13px;line-height:16px">South Temperate:</div><div class="b" style="left:342px;top:759px;font-size:13px;line-height:16px">Fine</div>
<div class="b" style="right:945px;top:793px;font-size:13px;line-height:16px">Modifier:</div><div class="b" style="left:342px;top:793px;font-size:13px;line-height:16px">+1</div>
<div class="b" style="right:945px;top:815px;font-size:13px;line-height:16px">Impulse Advance:</div><div class="b" style="left:342px;top:815px;font-size:13px;line-height:16px">2</div>

<div class="grid">
<div class="h">Weather Zone</div><div class="h">Fine</div><div class="h">Rain</div><div class="h">Storm</div><div class="h">Snow</div><div class="h">Blizzard</div>
<div class="h">Arctic</div><div class="s">30%</div><div class="s">40%</div><div class="s">20%</div><div class="s">10%</div><div class="s">0%</div>
<div class="h">North Temperate</div><div>50%</div><div>30%</div><div>20%</div><div>0%</div><div>0%</div>
<div class="h">Mediterranean</div><div>70%</div><div>30%</div><div>0%</div><div>0%</div><div>0%</div>
<div class="h">North Monsoon</div><div>30%</div><div>30%</div><div>40%</div><div>0%</div><div>0%</div>
<div class="h">South Monsoon</div><div>80%</div><div>20%</div><div>0%</div><div>0%</div><div>0%</div>
<div class="h">South Temperate</div><div>90%</div><div>10%</div><div>0%</div><div>0%</div><div>0%</div>
</div>
<div class="a" style="left:463px;top:670px;width:543px;height:1px;background:#111"></div>
<div class="a" style="left:613px;top:652px;width:1px;height:133px;background:#111"></div>
<div class="a" style="left:694px;top:652px;width:1px;height:18px;background:#111"></div>
<div class="a" style="left:776px;top:652px;width:1px;height:18px;background:#111"></div>
<div class="a" style="left:857px;top:652px;width:1px;height:18px;background:#111"></div>
<div class="a" style="left:933px;top:652px;width:1px;height:18px;background:#111"></div>

<div class="btn" style="left:461px;top:804px;width:100px;height:30px"><svg width="16" height="16" viewBox="0 0 16 16" style="margin-right:4px"><path d="M1 9L4 7L6 10L13 1L15 3L7 15H5Z" fill="#10a020" stroke="#062" stroke-width=".6"/></svg><span>OK</span></div>
<div class="btn" style="left:907px;top:804px;width:100px;height:30px"><svg width="18" height="18" style="margin-right:4px"><use href="#book"/></svg><span><u>H</u>elp</span></div>
</body></html>
